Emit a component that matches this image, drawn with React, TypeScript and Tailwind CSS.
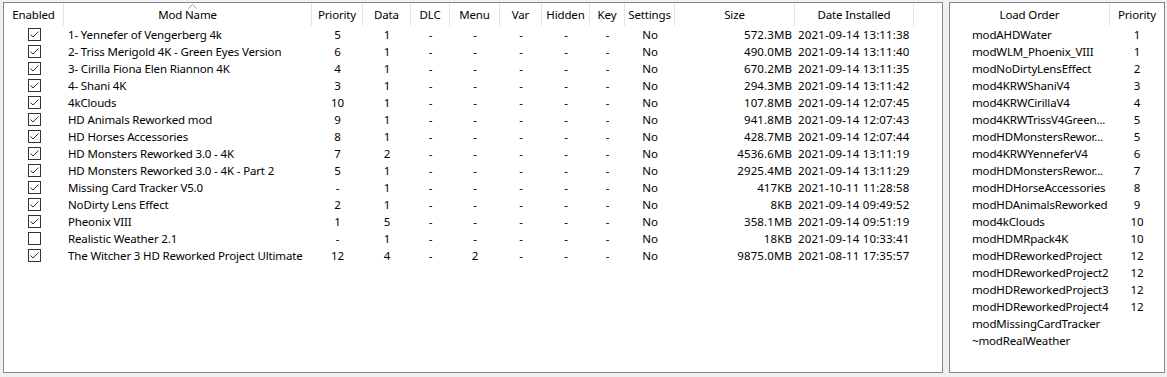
import React from "react";

type Mod = {
  on: boolean;
  name: string;
  prio: string;
  data: string;
  menu?: string;
  size: string;
  date: string;
};

const MODS: Mod[] = [
  { on: true, name: "1- Yennefer of Vengerberg 4k", prio: "5", data: "1", size: "572.3MB", date: "2021-09-14 13:11:38" },
  { on: true, name: "2- Triss Merigold 4K - Green Eyes Version", prio: "6", data: "1", size: "490.0MB", date: "2021-09-14 13:11:40" },
  { on: true, name: "3- Cirilla Fiona Elen Riannon 4K", prio: "4", data: "1", size: "670.2MB", date: "2021-09-14 13:11:35" },
  { on: true, name: "4- Shani 4K", prio: "3", data: "1", size: "294.3MB", date: "2021-09-14 13:11:42" },
  { on: true, name: "4kClouds", prio: "10", data: "1", size: "107.8MB", date: "2021-09-14 12:07:45" },
  { on: true, name: "HD Animals Reworked mod", prio: "9", data: "1", size: "941.8MB", date: "2021-09-14 12:07:43" },
  { on: true, name: "HD Horses Accessories", prio: "8", data: "1", size: "428.7MB", date: "2021-09-14 12:07:44" },
  { on: true, name: "HD Monsters Reworked 3.0 - 4K", prio: "7", data: "2", size: "4536.6MB", date: "2021-09-14 13:11:19" },
  { on: true, name: "HD Monsters Reworked 3.0 - 4K - Part 2", prio: "5", data: "1", size: "2925.4MB", date: "2021-09-14 13:11:29" },
  { on: true, name: "Missing Card Tracker V5.0", prio: "-", data: "1", size: "417KB", date: "2021-10-11 11:28:58" },
  { on: true, name: "NoDirty Lens Effect", prio: "2", data: "1", size: "8KB", date: "2021-09-14 09:49:52" },
  { on: true, name: "Pheonix VIII", prio: "1", data: "5", size: "358.1MB", date: "2021-09-14 09:51:19" },
  { on: false, name: "Realistic Weather 2.1", prio: "-", data: "1", size: "18KB", date: "2021-09-14 10:33:41" },
  { on: true, name: "The Witcher 3 HD Reworked Project Ultimate", prio: "12", data: "4", menu: "2", size: "9875.0MB", date: "2021-08-11 17:35:57" },
];

const ORDER: [string, string][] = [
  ["modAHDWater", "1"],
  ["modWLM_Phoenix_VIII", "1"],
  ["modNoDirtyLensEffect", "2"],
  ["mod4KRWShaniV4", "3"],
  ["mod4KRWCirillaV4", "4"],
  ["mod4KRWTrissV4Green...", "5"],
  ["modHDMonstersRewor...", "5"],
  ["mod4KRWYenneferV4", "6"],
  ["modHDMonstersRewor...", "7"],
  ["modHDHorseAccessories", "8"],
  ["modHDAnimalsReworked", "9"],
  ["mod4kClouds", "10"],
  ["modHDMRpack4K", "10"],
  ["modHDReworkedProject", "12"],
  ["modHDReworkedProject2", "12"],
  ["modHDReworkedProject3", "12"],
  ["modHDReworkedProject4", "12"],
  ["modMissingCardTracker", ""],
  ["~modRealWeather", ""],
];

const COLS = "grid-cols-[60px_248px_51px_48px_39px_50px_42px_48px_35px_50px_120px_119px_1fr]";

function Check({ on }: { on: boolean }) {
  return (
    <span className="flex h-[13px] w-[13px] items-center justify-center border border-[#333] bg-white">
      {on && (
        <svg width="11" height="11" viewBox="0 0 11 11">
          <polyline points="1.5,5.5 4,8 9.5,2.5" fill="none" stroke="#333" strokeWidth="1" />
        </svg>
      )}
    </span>
  );
}

function Head({ children, line = true }: { children?: React.ReactNode; line?: boolean }) {
  return (
    <div className={`flex h-[23px] items-center justify-center ${line ? "border-r border-[#e5e5e5]" : ""}`}>
      {children}
    </div>
  );
}

export default function App() {
  return (
    <div className="flex h-[377px] w-[1167px] gap-[6px] bg-[#f0f0f0] pl-[3px] pt-[2px] text-[11.5px] tracking-[-0.15px] text-black [font-family:'Segoe_UI','Noto_Sans',sans-serif]">
      <div className="h-[371px] w-[940px] overflow-hidden border border-[#828790] bg-white">
        <div className={`relative grid ${COLS}`}>
          <Head>Enabled</Head>
          <Head>
            Mod Name
            <svg className="absolute left-[184px] top-[1px]" width="9" height="5" viewBox="0 0 9 5">
              <polyline points="0.5,4.5 4.5,0.5 8.5,4.5" fill="none" stroke="#999" strokeWidth="1" />
            </svg>
          </Head>
          <Head>Priority</Head>
          <Head>Data</Head>
          <Head>DLC</Head>
          <Head>Menu</Head>
          <Head>Var</Head>
          <Head>Hidden</Head>
          <Head>Key</Head>
          <Head>Settings</Head>
          <Head>Size</Head>
          <Head>Date Installed</Head>
          <Head line={false} />
        </div>
        {MODS.map((m, i) => (
          <div key={i} className={`grid h-[17px] ${COLS} items-center leading-[17px]`}>
            <div className="flex justify-center">
              <Check on={m.on} />
            </div>
            <div className="whitespace-nowrap pl-[4px]">{m.name}</div>
            <div className="text-center">{m.prio}</div>
            <div className="text-center">{m.data}</div>
            <div className="text-center">-</div>
            <div className="text-center">{m.menu ?? "-"}</div>
            <div className="text-center">-</div>
            <div className="text-center">-</div>
            <div className="text-center">-</div>
            <div className="text-center">No</div>
            <div className="pr-[3px] text-right tracking-[0.1px]">{m.size}</div>
            <div className="whitespace-nowrap pl-[3px] tracking-[0.15px]">{m.date}</div>
            <div />
          </div>
        ))}
      </div>
      <div className="h-[371px] w-[216px] overflow-hidden border border-[#828790] bg-white">
        <div className="grid grid-cols-[160px_1fr]">
          <Head>Load Order</Head>
          <Head line={false}>Priority</Head>
        </div>
        {ORDER.map(([n, p], i) => (
          <div key={i} className="grid h-[17px] grid-cols-[160px_1fr] items-center leading-[17px]">
            <div className="whitespace-nowrap pl-[22px]">{n}</div>
            <div className="text-center">{p}</div>
          </div>
        ))}
      </div>
    </div>
  );
}
